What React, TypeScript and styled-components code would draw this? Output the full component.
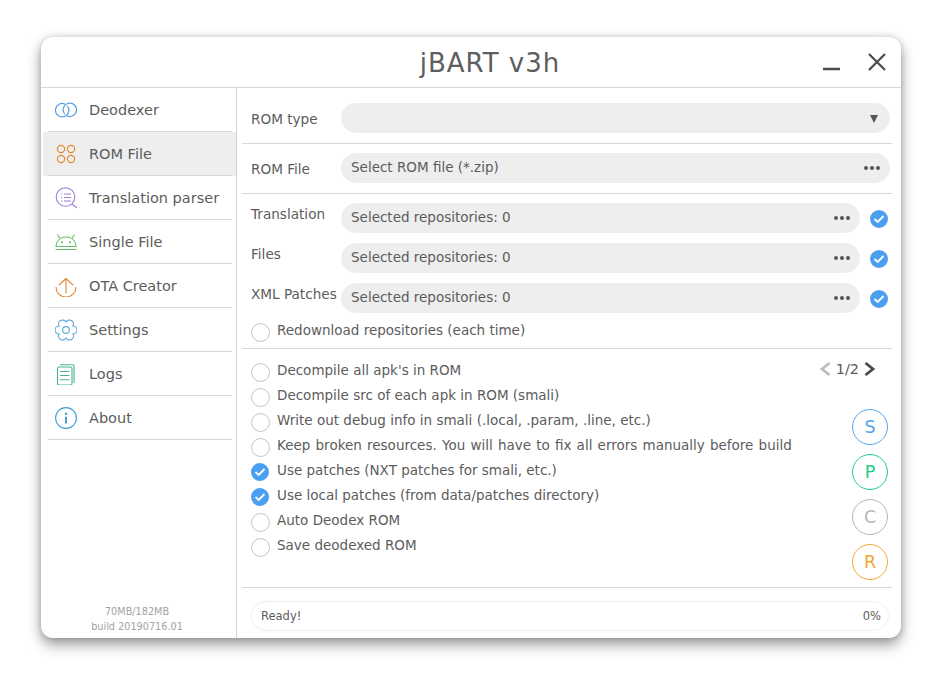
import React from "react";
import styled, { createGlobalStyle } from "styled-components";

const GlobalStyle = createGlobalStyle`
	html, body {
		margin: 0;
		padding: 0;
		background: #fff;
	}
	body {
		font-family: "DejaVu Sans", "Liberation Sans", sans-serif;
		color: #5c5c5c;
	}
`;

const Page = styled.div`
	width: 946px;
	height: 691px;
	padding: 37px 0 0 41px;
	box-sizing: border-box;
	overflow: hidden;
`;

const Win = styled.div`
	width: 860px;
	height: 601px;
	background: #fff;
	border-radius: 12px;
	box-shadow: 0 7px 14px rgba(0, 0, 0, 0.38), 0 0 7px rgba(0, 0, 0, 0.16);
	display: flex;
	flex-direction: column;
	overflow: hidden;
`;

const TitleBar = styled.header`
	height: 51px;
	flex: none;
	box-sizing: border-box;
	border-bottom: 1px solid #d8d8d8;
	padding: 2px 0 0 38px;
	display: flex;
	align-items: center;
	justify-content: center;
	position: relative;
`;

const Title = styled.h1`
	margin: 0;
	font-size: 26px;
	font-weight: 400;
	color: #5e5e5e;
	letter-spacing: 1px;
`;

const WinButtons = styled.div`
	position: absolute;
	top: 16px;
	right: 15px;
	display: flex;
	align-items: flex-start;
	gap: 27px;
`;

const Body = styled.div`
	flex: 1;
	display: flex;
	min-height: 0;
`;

const Sidebar = styled.nav`
	width: 196px;
	flex: none;
	box-sizing: border-box;
	border-right: 1px solid #d2d2d2;
	display: flex;
	flex-direction: column;
`;

const MenuItem = styled.div<{ $active?: boolean }>`
	height: 44px;
	flex: none;
	box-sizing: border-box;
	margin-left: ${(p) => (p.$active ? "2px" : "7px")};
	margin-right: ${(p) => (p.$active ? "0" : "4px")};
	padding-left: ${(p) => (p.$active ? "12px" : "7px")};
	background: ${(p) => (p.$active ? "#eeeeee" : "transparent")};
	border-bottom: 1px solid ${(p) => (p.$active ? "#eeeeee" : "#d8d8d8")};
	display: flex;
	align-items: center;
	gap: 12px;
	font-size: 14.5px;
	color: #5c5c5c;
	position: relative;
	svg {
		flex: none;
	}
	${(p) =>
		p.$active &&
		`
    &::after {
      content: "";
      position: absolute;
      left: 5px;
      right: 4px;
      bottom: -1px;
      height: 1px;
      background: #d8d8d8;
    }
  `}
`;

const SideFoot = styled.div`
	margin-top: auto;
	padding: 0 3px 4px 0;
	text-align: center;
	font-size: 9.7px;
	line-height: 15px;
	color: #a2a2a2;
`;

const Main = styled.main`
	flex: 1;
	min-width: 0;
	padding: 0 9px 0 5px;
	display: flex;
	flex-direction: column;
`;

const Section = styled.section<{ $top?: number; $bottom?: number }>`
	border-bottom: 1px solid #d8d8d8;
	padding: ${(p) => p.$top ?? 9}px 2px ${(p) => p.$bottom ?? 10}px 9px;
`;

const Row = styled.div`
	display: flex;
	align-items: center;
	height: 30px;
	font-size: 14px;
`;

const RepoRow = styled(Row)`
	margin-bottom: 10px;
	&:nth-child(3) {
		margin-bottom: 8px;
	}
`;

const Label = styled.label<{ $up?: boolean }>`
	width: 90px;
	flex: none;
	font-size: 13.6px;
	white-space: nowrap;
	color: #5c5c5c;
	position: relative;
	top: ${(p) => (p.$up ? "-4px" : "1px")};
`;

const Pill = styled.div`
	flex: 1;
	height: 30px;
	box-sizing: border-box;
	border-radius: 15px;
	background: #eeeeee;
	display: flex;
	align-items: center;
	justify-content: space-between;
	padding: 0 10px 2px;
	font-size: 13.5px;
	color: #5c5c5c;
`;

const Dots = styled.span`
	display: flex;
	gap: 2px;
	margin: 2px 0 0;
	i {
		width: 4px;
		height: 4px;
		border-radius: 50%;
		background: #555;
	}
`;

const Arrow = styled.span`
	width: 0;
	height: 0;
	margin: 3px 2px 0 0;
	border-left: 4px solid transparent;
	border-right: 4px solid transparent;
	border-top: 8px solid #555;
`;

const Radio = styled.span`
	width: 19px;
	height: 19px;
	margin-right: -1px;
	flex: none;
	box-sizing: border-box;
	border-radius: 50%;
	border: 1px solid #c4c4c4;
	background: #fff;
`;

const CheckBlue = styled.span`
	width: 18px;
	height: 18px;
	flex: none;
	border-radius: 50%;
	background: #4b9ff0;
	display: flex;
	align-items: center;
	justify-content: center;
`;

const RepoCheck = styled(CheckBlue)`
	margin-left: 10px;
	margin-right: 2px;
	position: relative;
	top: 1px;
`;

const Opt = styled.div<{ $wide?: boolean }>`
	display: flex;
	align-items: flex-start;
	gap: 8px;
	height: 25px;
	font-size: 13.5px;
	line-height: 18px;
	white-space: nowrap;
	word-spacing: ${(p) => (p.$wide ? "0.9px" : "0")};
	span:first-child {
		margin-top: 2px;
	}
`;

const OptionsArea = styled.section`
	flex: 1;
	min-height: 0;
	border-bottom: 1px solid #d8d8d8;
	padding: 12px 2px 0 9px;
	display: flex;
	justify-content: space-between;
`;

const OptList = styled.div`
	display: flex;
	flex-direction: column;
`;

const SideCol = styled.div`
	display: flex;
	flex-direction: column;
	align-items: flex-end;
`;

const Pager = styled.div`
	flex: none;
	display: flex;
	align-items: center;
	gap: 4px;
	height: 18px;
	margin: -1px 14px 31px 0;
	font-size: 14.5px;
`;

const Circle = styled.div<{ $color: string }>`
	flex: none;
	width: 36px;
	height: 36px;
	margin: 0 2px 9px 0;
	box-sizing: border-box;
	border-radius: 50%;
	border: 1px solid ${(p) => p.$color};
	color: ${(p) => p.$color};
	display: flex;
	align-items: center;
	justify-content: center;
	font-size: 17.5px;
`;

const Status = styled.div`
	margin: 13px 3px 7px 9px;
	height: 30px;
	box-sizing: border-box;
	border: 1px solid #efefef;
	border-radius: 15px;
	padding: 0 7px 0 9px;
	display: flex;
	align-items: center;
	justify-content: space-between;
	font-size: 11.5px;
	color: #5c5c5c;
`;

const Tick = () => (
	<svg width="12" height="10" viewBox="0 0 12 10">
		<path d="M1.5 5 L4.7 8 L10.5 2" fill="none" stroke="#fff" strokeWidth="1.8" />
	</svg>
);

const DotsIcon = () => (
	<Dots>
		<i />
		<i />
		<i />
	</Dots>
);

// six rounded lobes around the centre
const gearPath = () => {
	const r = 8;
	const pt = (deg: number) => {
		const a = (deg * Math.PI) / 180;
		return `${(11 + r * Math.cos(a)).toFixed(2)} ${(11 + r * Math.sin(a)).toFixed(2)}`;
	};
	let d = `M${pt(-30)}`;
	for (let i = 0; i < 6; i++) {
		d += ` A4 4 0 0 1 ${pt(-30 + (i + 1) * 60)}`;
	}
	return d + " Z";
};

const icons: Record<string, React.ReactNode> = {
	deodexer: (
		<svg width="22" height="22" viewBox="0 0 22 22" fill="none" stroke="#5a9fe3" strokeWidth="1.2">
			<path d="M12.2 6.82 A6.7 6.7 0 1 1 9.9 5.1" />
			<path d="M9.8 15.18 A6.7 6.7 0 1 1 12.1 16.9" />
		</svg>
	),
	rom: (
		<svg width="22" height="22" viewBox="0 0 22 22" fill="none" stroke="#e5872b" strokeWidth="1.2">
			<circle cx="6" cy="6" r="3.6" />
			<circle cx="16" cy="6" r="3.6" />
			<circle cx="6" cy="16" r="3.6" />
			<circle cx="16" cy="16" r="3.6" />
		</svg>
	),
	parser: (
		<svg width="22" height="22" viewBox="0 0 22 22" fill="none" stroke="#9b80d8" strokeWidth="1.1">
			<circle cx="10.5" cy="10" r="9.3" />
			<path d="M17 17 L22 21" />
			<path d="M9 7 H16 M9 10.5 H16 M9 14 H16" />
			<path d="M6 7 H7.2 M6 10.5 H7.2 M6 14 H7.2" />
		</svg>
	),
	single: (
		<svg width="22" height="22" viewBox="0 0 22 22" fill="none" stroke="#62bd63" strokeWidth="1.1">
			<path d="M1 15.5 C1.5 9 6 6 11 6 C16 6 20.5 9 21 15.5 Z" />
			<path d="M0.5 18.5 H21.5" />
			<path d="M5 7.5 L2.5 3.5 M17 7.5 L19.5 3.5" />
			<circle cx="7" cy="11.3" r="1" fill="#62bd63" stroke="none" />
			<circle cx="15" cy="11.3" r="1" fill="#62bd63" stroke="none" />
		</svg>
	),
	ota: (
		<svg width="22" height="22" viewBox="0 0 22 22" fill="none" stroke="#e08a2e" strokeWidth="1.1">
			<path d="M1 12 A10 10 0 0 0 21 12" />
			<path d="M11 18 V3.5 M4 10 L11 3.5 L18 10" />
		</svg>
	),
	settings: (
		<svg width="22" height="22" viewBox="0 0 22 22" fill="none" stroke="#5ba9d8" strokeWidth="1.1">
			<path d={gearPath()} />
			<circle cx="11" cy="11" r="3.4" />
		</svg>
	),
	logs: (
		<svg width="22" height="22" viewBox="0 0 22 22" fill="none" stroke="#49b592" strokeWidth="1.1">
			<rect x="2.5" y="4" width="14.5" height="18" rx="1.5" />
			<path d="M5 1.8 H18 A1 1 0 0 1 19 2.8 V20" />
			<path d="M5 8.5 H14.5 M5 12.5 H14.5 M5 16.8 H14.5" />
		</svg>
	),
	about: (
		<svg width="22" height="22" viewBox="0 0 22 22" fill="none" stroke="#439fd8" strokeWidth="1.1">
			<circle cx="11" cy="11" r="10.4" />
			<circle cx="11" cy="6.8" r="1.2" fill="#439fd8" stroke="none" />
			<path d="M11 9.8 V16.5" strokeWidth="2" />
		</svg>
	),
};

const menu = [
	{ key: "deodexer", label: "Deodexer" },
	{ key: "rom", label: "ROM File", active: true },
	{ key: "parser", label: "Translation parser" },
	{ key: "single", label: "Single File" },
	{ key: "ota", label: "OTA Creator" },
	{ key: "settings", label: "Settings" },
	{ key: "logs", label: "Logs" },
	{ key: "about", label: "About" },
];

const repos = ["Translation", "Files", "XML Patches"];

const options = [
	{ label: "Decompile all apk's in ROM" },
	{ label: "Decompile src of each apk in ROM (smali)" },
	{ label: "Write out debug info in smali (.local, .param, .line, etc.)" },
	{ label: "Keep broken resources. You will have to fix all errors manually before build", wide: true },
	{ label: "Use patches (NXT patches for smali, etc.)", on: true },
	{ label: "Use local patches (from data/patches directory)", on: true },
	{ label: "Auto Deodex ROM" },
	{ label: "Save deodexed ROM" },
];

const circles = [
	{ letter: "S", color: "#55a4f2" },
	{ letter: "P", color: "#1fce85" },
	{ letter: "C", color: "#b5b5b5" },
	{ letter: "R", color: "#f5a531" },
];

export default function App() {
	return (
		<Page>
			<GlobalStyle />
			<Win>
				<TitleBar>
					<Title>jBART v3h</Title>
					<WinButtons>
						<svg width="18" height="22" viewBox="0 0 18 22">
							<path d="M0 16 H17" stroke="#4a4a4a" strokeWidth="2.4" />
						</svg>
						<svg width="18" height="18" viewBox="0 0 18 18">
							<path d="M1 1 L17 17 M17 1 L1 17" stroke="#4a4a4a" strokeWidth="2.2" />
						</svg>
					</WinButtons>
				</TitleBar>
				<Body>
					<Sidebar>
						{menu.map((m) => (
							<MenuItem key={m.key} $active={m.active}>
								{icons[m.key]}
								{m.label}
							</MenuItem>
						))}
						<SideFoot>
							70MB/182MB
							<br />
							build 20190716.01
						</SideFoot>
					</Sidebar>
					<Main>
						<Section $top={15}>
							<Row>
								<Label>ROM type</Label>
								<Pill>
									<span />
									<Arrow />
								</Pill>
							</Row>
						</Section>
						<Section>
							<Row>
								<Label>ROM File</Label>
								<Pill>
									Select ROM file (*.zip)
									<DotsIcon />
								</Pill>
							</Row>
						</Section>
						<Section $bottom={2}>
							{repos.map((r) => (
								<RepoRow key={r}>
									<Label $up>{r}</Label>
									<Pill>
										Selected repositories: 0
										<DotsIcon />
									</Pill>
									<RepoCheck>
										<Tick />
									</RepoCheck>
								</RepoRow>
							))}
							<Opt>
								<Radio />
								Redownload repositories (each time)
							</Opt>
						</Section>
						<OptionsArea>
							<OptList>
								{options.map((o) => (
									<Opt key={o.label} $wide={o.wide}>
										{o.on ? (
											<CheckBlue>
												<Tick />
											</CheckBlue>
										) : (
											<Radio />
										)}
										{o.label}
									</Opt>
								))}
							</OptList>
							<SideCol>
								<Pager>
									<svg width="13" height="16" viewBox="0 0 13 16">
										<path d="M10.5 2 L3 8 L10.5 14" fill="none" stroke="#bdbdbd" strokeWidth="2.8" />
									</svg>
									1/2
									<svg width="13" height="16" viewBox="0 0 13 16">
										<path d="M2.5 2 L10 8 L2.5 14" fill="none" stroke="#4a4a4a" strokeWidth="2.8" />
									</svg>
								</Pager>
								{circles.map((c) => (
									<Circle key={c.letter} $color={c.color}>
										{c.letter}
									</Circle>
								))}
							</SideCol>
						</OptionsArea>
						<Status>
							<span>Ready!</span>
							<span>0%</span>
						</Status>
					</Main>
				</Body>
			</Win>
		</Page>
	);
}
